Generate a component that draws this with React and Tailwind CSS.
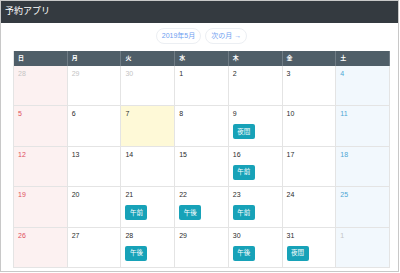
import React from "react";

// 予約カレンダー (2019年5月)
const DAYS = ["日", "月", "火", "水", "木", "金", "土"];

const WEEKS = [
  [{ d: 28, out: true }, { d: 29, out: true }, { d: 30, out: true }, { d: 1 }, { d: 2 }, { d: 3 }, { d: 4 }],
  [{ d: 5 }, { d: 6 }, { d: 7, today: true }, { d: 8 }, { d: 9, slot: "夜間" }, { d: 10 }, { d: 11 }],
  [{ d: 12 }, { d: 13 }, { d: 14 }, { d: 15 }, { d: 16, slot: "午前" }, { d: 17 }, { d: 18 }],
  [{ d: 19 }, { d: 20 }, { d: 21, slot: "午前" }, { d: 22, slot: "午後" }, { d: 23, slot: "午前" }, { d: 24 }, { d: 25 }],
  [{ d: 26 }, { d: 27 }, { d: 28, slot: "午後" }, { d: 29 }, { d: 30, slot: "午後" }, { d: 31, slot: "夜間" }, { d: 1, out: true }],
];

const Cell = ({ day, col }) => {
  // 背景色: 日曜はピンク、土曜は水色、今日は黄色
  let bg = "bg-white";
  if (col === 0) bg = "bg-[#fcf1f1]";
  if (col === 6) bg = "bg-[#f2f8fd]";
  if (day.today) bg = "bg-[#fef9d7]";

  let color = "text-[#2b2b2b]";
  if (col === 0) color = "text-[#e0505c]";
  if (col === 6) color = "text-[#4ea6d4]";
  if (day.out) color = "text-[#c4c4c4]";

  return (
    <div className={`${bg} border-r border-b border-[#e4e4e4] h-[40.4px] px-[4px] pt-[3px] flex flex-col`}>
      <span className={`${color} text-[7px] leading-[9px]`}>{day.d}</span>
      {day.slot && (
        <span className="mt-[6px] w-[22px] h-[15px] rounded-[2px] bg-[#17a2b8] text-white text-[6.5px] flex items-center justify-center">
          {day.slot}
        </span>
      )}
    </div>
  );
};

export default function App() {
  return (
    <div className="w-[400px] h-[273px] bg-white" style={{ fontFamily: '"Liberation Sans", "Noto Sans CJK JP", sans-serif' }}>
      <div className="w-[399px] h-[272px] border border-[#c8c8c8] flex flex-col">
        <div className="h-[22px] bg-[#343a40] text-white text-[9px] px-[4px] flex items-center shrink-0">予約アプリ</div>

        <div className="pl-[12px] pr-[8px]">
          <div className="w-[377px] flex justify-center gap-[4px] pt-[5px]">
            <span className="h-[16px] px-[5px] rounded-full border border-[#eceff3] text-[#6e9ef0] text-[7px] flex items-center">2019年5月</span>
            <span className="h-[16px] px-[5px] rounded-full border border-[#eceff3] text-[#6e9ef0] text-[7px] flex items-center">次の月 →</span>
          </div>

          <div className="w-[377px] mt-[7px] border-l border-[#e4e4e4]">
            <div className="grid grid-cols-7 bg-[#4f5e68] h-[15px]">
              {DAYS.map((d) => (
                <div key={d} className="border-r border-[#6f7c85] px-[4px] flex items-center text-white font-bold text-[6px]">
                  {d}
                </div>
              ))}
            </div>
            {WEEKS.map((week, i) => (
              <div key={i} className="grid grid-cols-7">
                {week.map((day, j) => (
                  <Cell key={j} day={day} col={j} />
                ))}
              </div>
            ))}
          </div>
        </div>
      </div>
    </div>
  );
}
